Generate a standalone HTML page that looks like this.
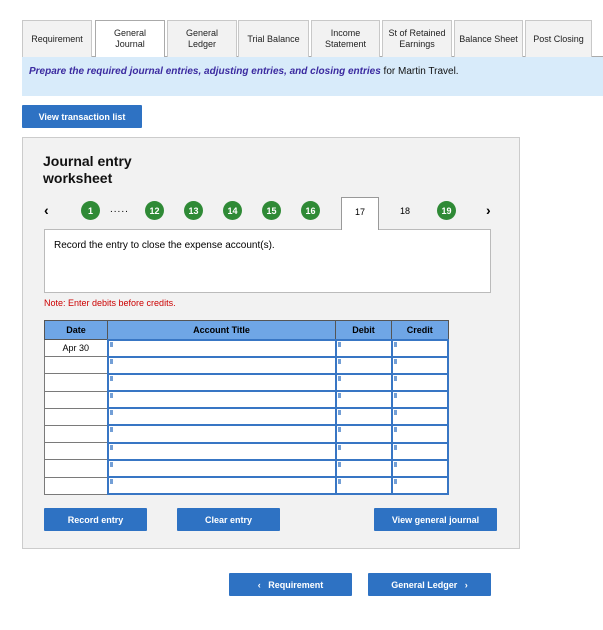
<!DOCTYPE html>
<html><head><style>
*{box-sizing:border-box;margin:0;padding:0}
body{width:603px;height:630px;background:#fff;font-family:"Liberation Sans",Arial,sans-serif;position:relative;overflow:hidden}
.a{position:absolute}
.tab{position:absolute;top:20px;height:37px;background:#f2f2f2;border:1px solid #c8c8c8;border-bottom:none;font-size:9px;color:#222;display:flex;align-items:center;justify-content:center;text-align:center;line-height:11px}
.tab.on{background:#fff;border-color:#aaa;height:37px;z-index:2}
.btn{position:absolute;background:#2e72c3;color:#fff;font-size:9px;font-weight:bold;display:flex;align-items:center;justify-content:center;border-radius:1px}
.c{position:absolute;top:201px;width:19px;height:19px;border-radius:50%;background:#2f8a36;color:#fff;font-size:9px;font-weight:bold;display:flex;align-items:center;justify-content:center}
table{position:absolute;left:44px;top:320px;border-collapse:collapse;width:405px}
td,th{border:1px solid #7a7a7a;height:17.2px;font-size:9px;padding:0}
th{background:#6fa6e6;height:19px;border-color:#555}
td.i{border:2px solid #3876c4;background:#fff;position:relative}
td.i:before{content:"";position:absolute;left:1px;top:1px;width:3px;height:5px;border-left:3px solid #3876c4;opacity:.7}
</style></head><body>
<div class="a" style="left:22px;top:56px;width:581px;height:1px;background:#aaa"></div>
<div class="tab" style="left:22px;width:70px">Requirement</div>
<div class="tab on" style="left:95px;width:70px">General<br>Journal</div>
<div class="tab" style="left:167px;width:70px">General<br>Ledger</div>
<div class="tab" style="left:238px;width:71px">Trial Balance</div>
<div class="tab" style="left:311px;width:69px">Income<br>Statement</div>
<div class="tab" style="left:382px;width:70px">St of Retained<br>Earnings</div>
<div class="tab" style="left:454px;width:69px">Balance Sheet</div>
<div class="tab" style="left:525px;width:67px">Post Closing</div>
<div class="a" style="left:22px;top:57px;width:581px;height:39px;background:#d8ebfa;font-size:10px;padding:9px 7px;color:#111"><b><i style="color:#3b2aa0">Prepare the required journal entries, adjusting entries, and closing entries</i></b> for Martin Travel.</div>
<div class="btn" style="left:22px;top:105px;width:120px;height:23px">View transaction list</div>
<div class="a" style="left:22px;top:137px;width:498px;height:412px;background:#f2f2f2;border:1px solid #ccc"></div>
<div class="a" style="left:43px;top:153px;font-size:14px;font-weight:bold;line-height:17px;color:#111">Journal entry<br>worksheet</div>
<div class="a" style="left:44px;top:202px;font-size:14px;font-weight:bold">‹</div>
<div class="c" style="left:81px">1</div>
<div class="a" style="left:110px;top:204px;font-size:10px;letter-spacing:1px">.....</div>
<div class="c" style="left:145px">12</div>
<div class="c" style="left:184px">13</div>
<div class="c" style="left:223px">14</div>
<div class="c" style="left:262px">15</div>
<div class="c" style="left:301px">16</div>
<div class="a" style="left:341px;top:197px;width:38px;height:33px;background:#fff;border:1px solid #999;border-bottom:none;font-size:9px;text-align:center;padding-top:9px;z-index:2">17</div>
<div class="a" style="left:400px;top:206px;font-size:9px">18</div>
<div class="c" style="left:437px">19</div>
<div class="a" style="left:486px;top:202px;font-size:14px;font-weight:bold">›</div>
<div class="a" style="left:44px;top:229px;width:447px;height:64px;background:#fff;border:1px solid #bbb;font-size:10px;padding:10px 9px">Record the entry to close the expense account(s).</div>
<div class="a" style="left:44px;top:298px;font-size:9px;color:#c00">Note: Enter debits before credits.</div>
<table>
<tr><th style="width:63px">Date</th><th style="width:228px">Account Title</th><th style="width:56px">Debit</th><th>Credit</th></tr>
<tr><td style="text-align:center;background:#fff">Apr 30</td><td class="i"></td><td class="i"></td><td class="i"></td></tr>
<tr><td style="background:#fff"></td><td class="i"></td><td class="i"></td><td class="i"></td></tr>
<tr><td style="background:#fff"></td><td class="i"></td><td class="i"></td><td class="i"></td></tr>
<tr><td style="background:#fff"></td><td class="i"></td><td class="i"></td><td class="i"></td></tr>
<tr><td style="background:#fff"></td><td class="i"></td><td class="i"></td><td class="i"></td></tr>
<tr><td style="background:#fff"></td><td class="i"></td><td class="i"></td><td class="i"></td></tr>
<tr><td style="background:#fff"></td><td class="i"></td><td class="i"></td><td class="i"></td></tr>
<tr><td style="background:#fff"></td><td class="i"></td><td class="i"></td><td class="i"></td></tr>
<tr><td style="background:#fff"></td><td class="i"></td><td class="i"></td><td class="i"></td></tr>
</table>
<div class="btn" style="left:44px;top:508px;width:103px;height:23px">Record entry</div>
<div class="btn" style="left:177px;top:508px;width:103px;height:23px">Clear entry</div>
<div class="btn" style="left:374px;top:508px;width:123px;height:23px">View general journal</div>
<div class="btn" style="left:229px;top:573px;width:123px;height:23px">‹&nbsp;&nbsp;&nbsp;Requirement</div>
<div class="btn" style="left:368px;top:573px;width:123px;height:23px">General Ledger&nbsp;&nbsp;&nbsp;›</div>
</body></html>
